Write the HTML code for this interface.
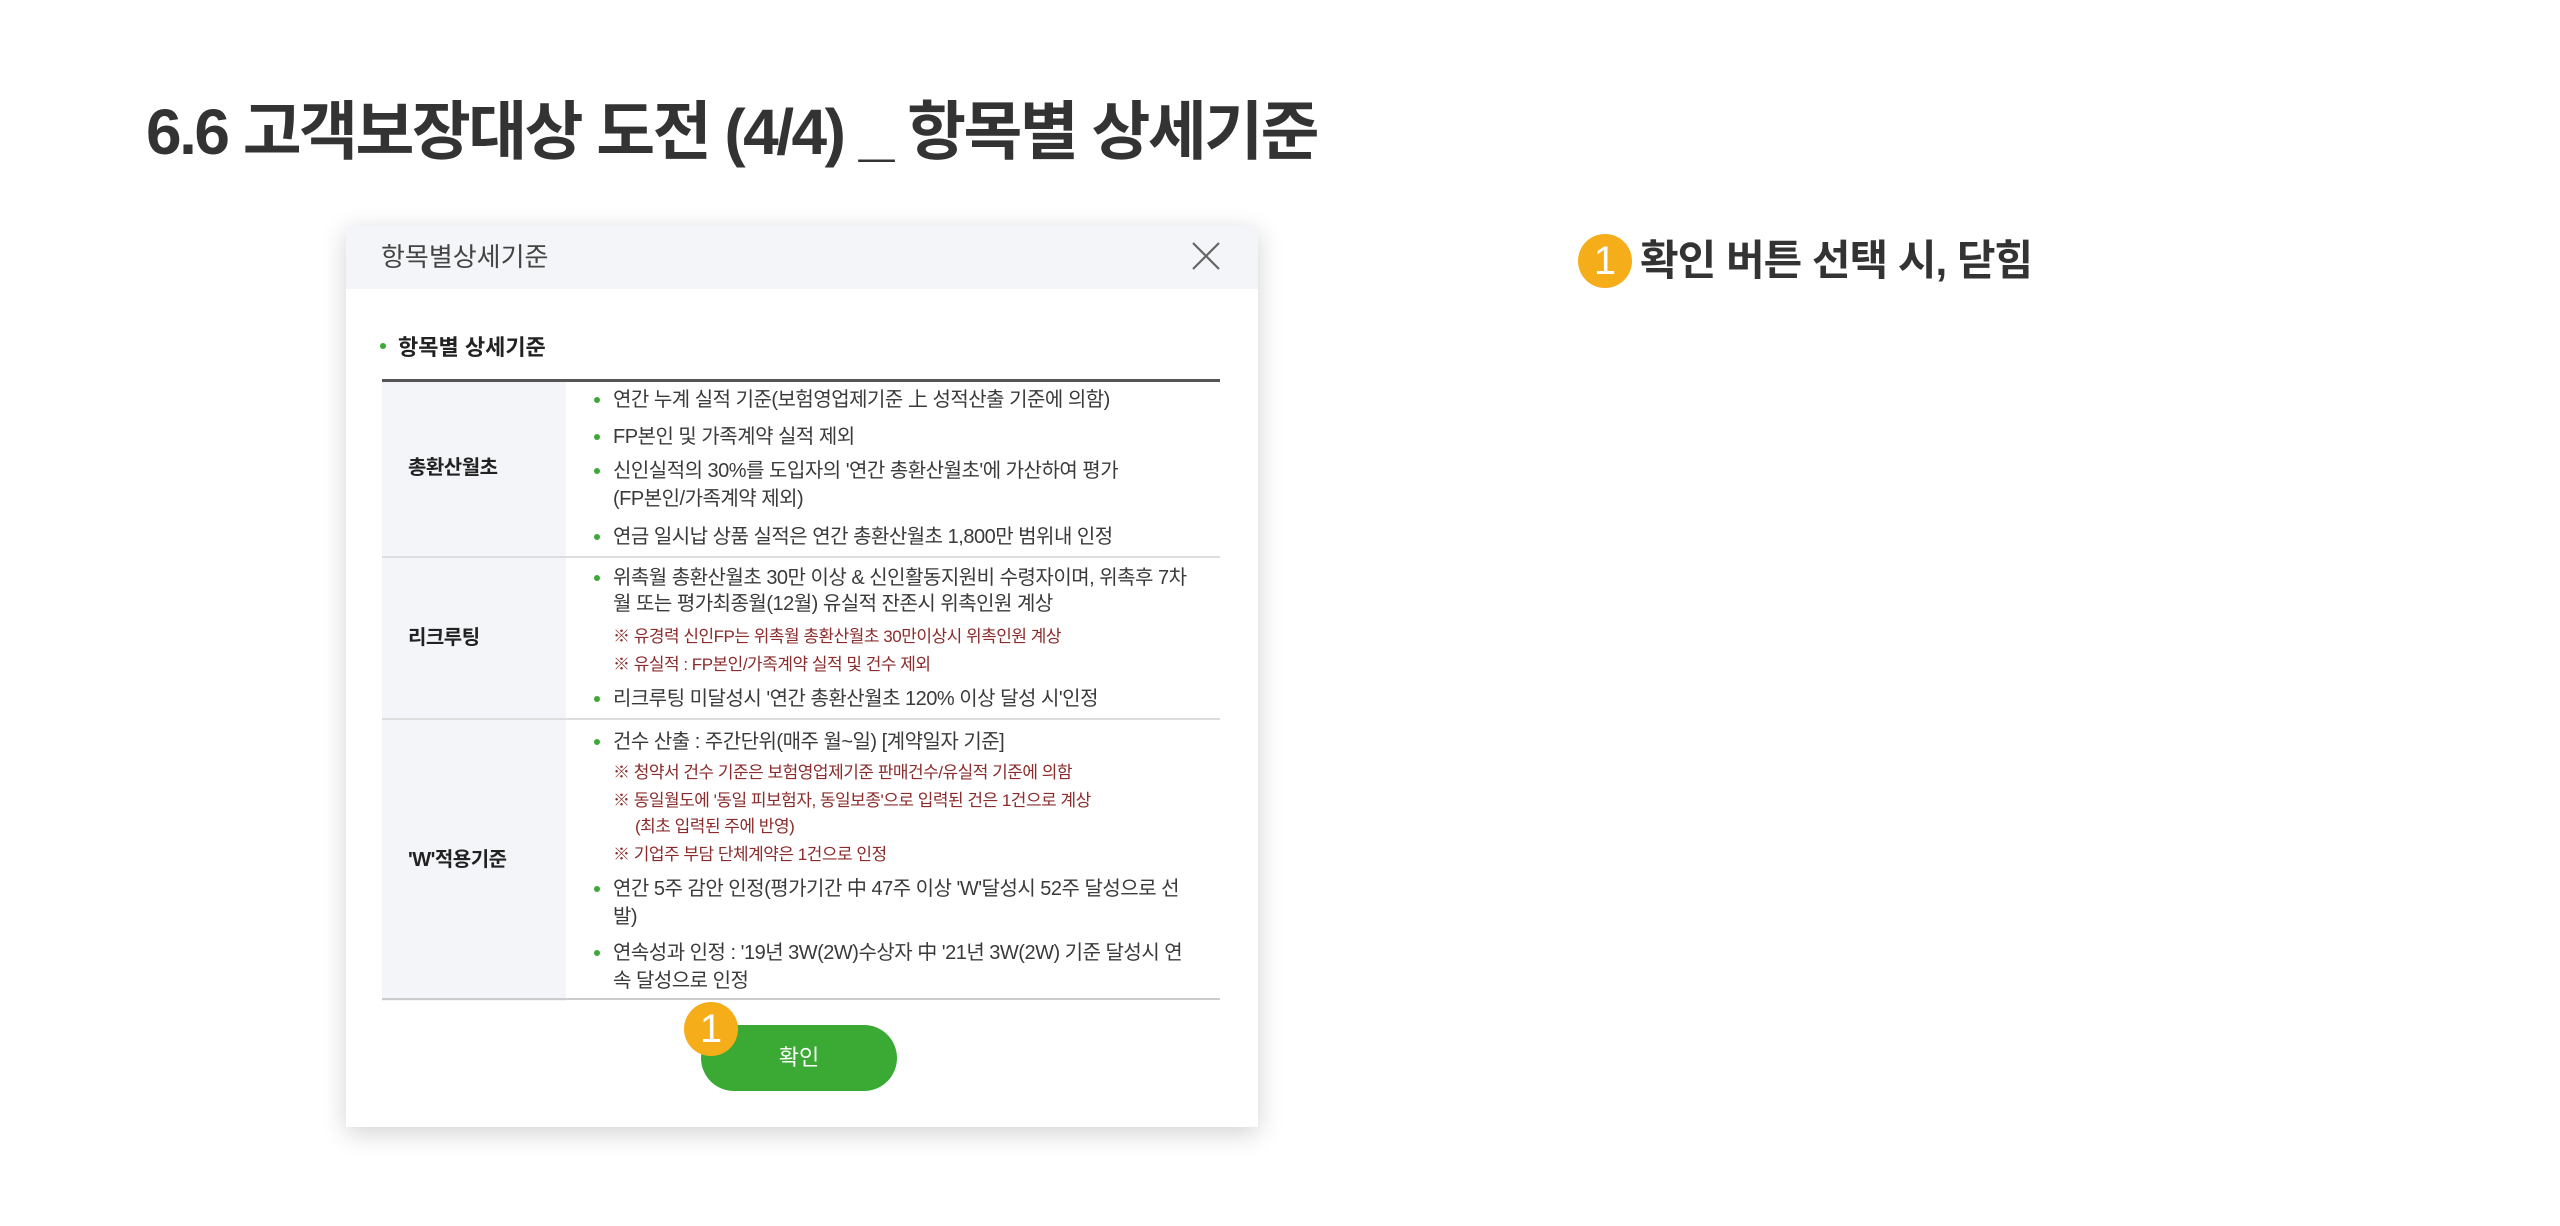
<!DOCTYPE html>
<html><head><meta charset="utf-8"><style>
*{margin:0;padding:0;box-sizing:border-box}
body{width:2560px;height:1226px;background:#fff;position:relative;overflow:hidden;font-family:"Liberation Sans","Noto Sans CJK KR",sans-serif;color:#333}
.a{position:absolute;white-space:nowrap}
.t{font-size:20px;line-height:28px;color:#3a3a3a;letter-spacing:-0.5px}
.r{font-size:17px;line-height:24px;color:#8b2b2b;letter-spacing:-0.5px}
.b{position:absolute;width:6px;height:6px;border-radius:50%;background:#3aaa35}
.lab{font-size:20px;font-weight:bold;line-height:28px;color:#222;letter-spacing:-0.5px}
.badge{position:absolute;border-radius:50%;background:#f6ad1a;color:#fff;text-align:center;font-family:"Liberation Sans",sans-serif}
</style></head><body>
<div class="a" style="left:146px;top:92px;font-size:64px;font-weight:bold;line-height:80px;color:#333;letter-spacing:-2.5px">6.6 고객보장대상 도전 (4/4) _ 항목별 상세기준</div>

<div style="position:absolute;left:346px;top:226px;width:912px;height:901px;background:#fff;box-shadow:0 6px 24px rgba(0,0,0,0.18)">
 <div style="height:63px;background:#f4f5f8"></div>
</div>
<div class="a" style="left:381px;top:240px;font-size:26px;line-height:34px;color:#444">항목별상세기준</div>
<svg class="a" style="left:1190px;top:240px" width="32" height="32" viewBox="0 0 32 32"><path d="M3 3L29 29M29 3L3 29" stroke="#666" stroke-width="2.2" fill="none"/></svg>

<div class="b" style="left:380px;top:343px"></div>
<div class="a" style="left:398px;top:333px;font-size:22px;font-weight:bold;line-height:30px;color:#222">항목별 상세기준</div>

<div class="a" style="left:382px;top:379px;width:838px;height:3px;background:#555"></div>
<div class="a" style="left:382px;top:382px;width:184px;height:619px;background:#f4f5f9"></div>
<div class="a" style="left:382px;top:556px;width:838px;height:2px;background:#ddd"></div>
<div class="a" style="left:382px;top:718px;width:838px;height:2px;background:#ddd"></div>
<div class="a" style="left:382px;top:998px;width:838px;height:2px;background:#ccc"></div>

<div class="a lab" style="left:408px;top:454px">총환산월초</div>
<div class="a lab" style="left:408px;top:624px">리크루팅</div>
<div class="a lab" style="left:408px;top:846px">'W'적용기준</div>

<div class="b" style="left:594px;top:397px"></div><div class="a t" style="left:613px;top:386px">연간 누계 실적 기준(보험영업제기준 上 성적산출 기준에 의함)</div>
<div class="b" style="left:594px;top:434px"></div><div class="a t" style="left:613px;top:423px">FP본인 및 가족계약 실적 제외</div>
<div class="b" style="left:594px;top:468px"></div><div class="a t" style="left:613px;top:457px">신인실적의 30%를 도입자의 '연간 총환산월초'에 가산하여 평가</div>
<div class="a t" style="left:613px;top:485px">(FP본인/가족계약 제외)</div>
<div class="b" style="left:594px;top:534px"></div><div class="a t" style="left:613px;top:523px">연금 일시납 상품 실적은 연간 총환산월초 1,800만 범위내 인정</div>

<div class="b" style="left:594px;top:575px"></div><div class="a t" style="left:613px;top:564px">위촉월 총환산월초 30만 이상 &amp; 신인활동지원비 수령자이며, 위촉후 7차</div>
<div class="a t" style="left:613px;top:590px">월 또는 평가최종월(12월) 유실적 잔존시 위촉인원 계상</div>
<div class="a r" style="left:613px;top:625px">※ 유경력 신인FP는 위촉월 총환산월초 30만이상시 위촉인원 계상</div>
<div class="a r" style="left:613px;top:653px">※ 유실적 : FP본인/가족계약 실적 및 건수 제외</div>
<div class="b" style="left:594px;top:696px"></div><div class="a t" style="left:613px;top:685px">리크루팅 미달성시 '연간 총환산월초 120% 이상 달성 시'인정</div>

<div class="b" style="left:594px;top:739px"></div><div class="a t" style="left:613px;top:728px">건수 산출 : 주간단위(매주 월~일) [계약일자 기준]</div>
<div class="a r" style="left:613px;top:761px">※ 청약서 건수 기준은 보험영업제기준 판매건수/유실적 기준에 의함</div>
<div class="a r" style="left:613px;top:789px">※ 동일월도에 '동일 피보험자, 동일보종'으로 입력된 건은 1건으로 계상</div>
<div class="a r" style="left:635px;top:815px">(최초 입력된 주에 반영)</div>
<div class="a r" style="left:613px;top:843px">※ 기업주 부담 단체계약은 1건으로 인정</div>
<div class="b" style="left:594px;top:886px"></div><div class="a t" style="left:613px;top:875px">연간 5주 감안 인정(평가기간 中 47주 이상 'W'달성시 52주 달성으로 선</div>
<div class="a t" style="left:613px;top:903px">발)</div>
<div class="b" style="left:594px;top:950px"></div><div class="a t" style="left:613px;top:939px">연속성과 인정 : '19년 3W(2W)수상자 中 '21년 3W(2W) 기준 달성시 연</div>
<div class="a t" style="left:613px;top:967px">속 달성으로 인정</div>

<div class="a" style="left:701px;top:1025px;width:196px;height:66px;border-radius:33px;background:#3aaa35;color:#fff;font-size:22px;line-height:66px;text-align:center">확인</div>
<div class="badge" style="left:684px;top:1002px;width:54px;height:54px;font-size:40px;line-height:54px">1</div>

<div class="badge" style="left:1578px;top:234px;width:54px;height:54px;font-size:40px;line-height:54px">1</div>
<div class="a" style="left:1640px;top:234px;font-size:42px;font-weight:bold;line-height:54px;color:#333;letter-spacing:-1px">확인 버튼 선택 시, 닫힘</div>
</body></html>
